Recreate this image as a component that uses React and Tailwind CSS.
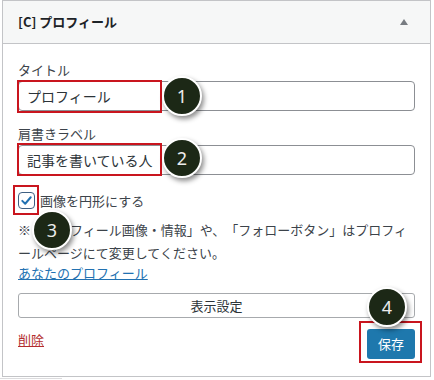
import React from 'react';

const Marker = ({ n, className }) => (
  <div
    className={`absolute z-20 w-[40px] h-[40px] rounded-full bg-[#1c2816] border-2 border-white shadow-[2px_3px_5px_rgba(0,0,0,0.45)] flex items-center justify-center text-[#ececec] text-[18px] font-['Noto_Sans',sans-serif] ${className}`}
  >
    {n}
  </div>
);

const RedBox = ({ className }) => (
  <div className={`absolute z-10 border-2 border-[#c9151e] pointer-events-none ${className}`} />
);

export default function App() {
  return (
    <div className="relative w-[434px] h-[380px] bg-white overflow-hidden font-['Noto_Sans_CJK_JP','Noto_Sans',sans-serif] text-[13px] text-[#3c434a] [text-spacing-trim:space-all]">
      <div className="ml-[2px] w-[429px] h-[377px] border border-[#c3c4c7] bg-white flex flex-col">
        {/* header */}
        <div className="h-[43px] shrink-0 bg-[#f6f7f7] border-b border-[#c3c4c7] px-[15px] flex items-center justify-between">
          <span className="font-semibold text-[13px] text-[#1d2327]">[C] プロフィール</span>
          <span className="w-0 h-0 mr-[7px] border-l-[4px] border-r-[4px] border-b-[6px] border-l-transparent border-r-transparent border-b-[#787c82]" />
        </div>

        {/* body */}
        <div className="px-[15px] pt-[16px]">
          <label className="block leading-[20px]">タイトル</label>
          <div className="relative mt-[1px]">
            <div className="h-[30px] border border-[#8c8f94] rounded-[4px] pl-[8px] flex items-center text-[14px] text-[#2c3338]">
              プロフィール
            </div>
            <RedBox className="left-[-1px] top-[-1px] w-[145px] h-[33px]" />
            <Marker n="1" className="left-[144px] top-[-5px]" />
          </div>

          <label className="block leading-[20px] mt-[13px]">肩書きラベル</label>
          <div className="relative mt-[1px]">
            <div className="h-[30px] border border-[#8c8f94] rounded-[4px] pl-[8px] flex items-center text-[14px] text-[#2c3338]">
              記事を書いている人
            </div>
            <RedBox className="left-[-1px] top-[-2px] w-[145px] h-[33px]" />
            <Marker n="2" className="left-[144px] top-[-7px]" />
          </div>

          <div className="flex items-center gap-[5px] mt-[17px]">
            <div className="relative w-[17px] h-[17px]">
              <div className="w-[17px] h-[17px] rounded-[4px] border border-[#3f5f82] bg-white flex items-center justify-center">
                <svg width="13" height="13" viewBox="0 0 20 20">
                  <path d="M3.5 10.5 L8 15 L16.5 5" fill="none" stroke="#2271b1" strokeWidth="3" strokeLinecap="round" strokeLinejoin="round" />
                </svg>
              </div>
              <RedBox className="left-[-5px] top-[-7px] w-[26px] h-[30px]" />
              <Marker n="3" className="left-[14px] top-[18px]" />
            </div>
            <span className="leading-[17px]">画像を円形にする</span>
          </div>

          <p className="mt-[9px] leading-[23px]">
            ※「プロフィール画像・情報」や、「フォローボタン」はプロフィールページにて変更してください。
          </p>
          <a className="block leading-[20px] -mt-[1px] text-[#2271b1] underline">あなたのプロフィール</a>

          <div className="relative mt-[10px] h-[25px] border border-[#a7aaad] rounded-[3px] bg-white flex items-center justify-center text-[#2c3338]">
            表示設定
          </div>

          <div className="flex items-start justify-between mt-[11px]">
            <a className="leading-[22px] text-[#b32d2e] underline">削除</a>
            <div className="relative">
              <div className="w-[48px] h-[30px] rounded-[3px] bg-[#1e78ad] text-white flex items-center justify-center text-[13px]">
                保存
              </div>
              <RedBox className="left-[-8px] top-[-8px] w-[63px] h-[42px]" />
              <Marker n="4" className="left-[0px] top-[-42px]" />
            </div>
          </div>
        </div>
      </div>
      <div className="w-[62px] h-[1px] mt-[1px] bg-[#dcdcde]" />
    </div>
  );
}
